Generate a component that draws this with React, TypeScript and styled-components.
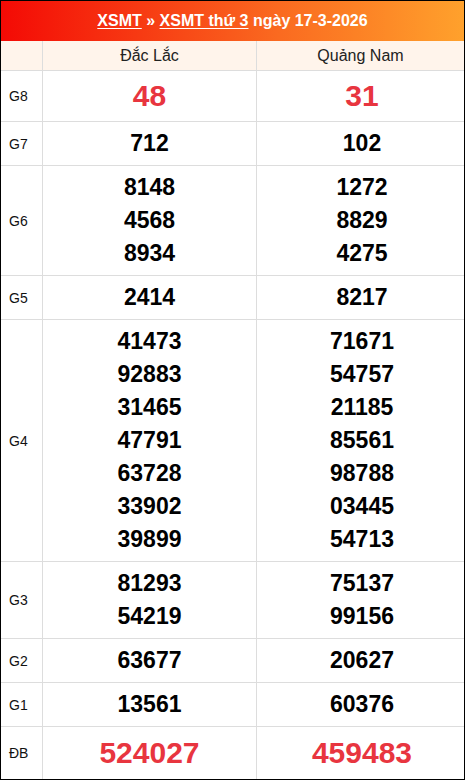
import React from 'react';
import styled, { createGlobalStyle } from 'styled-components';

const GlobalStyle = createGlobalStyle`
  html, body {
    margin: 0;
    padding: 0;
    background: #fff;
    font-family: "Liberation Sans", Arial, sans-serif;
  }
`;

// Styled components
const Board = styled.div`
  width: 465px;
  box-sizing: border-box;
  border: 1px solid #000;
`;

const TitleBar = styled.div`
  height: 40px;
  display: flex;
  align-items: center;
  justify-content: center;
  background: linear-gradient(90deg, #f40a05 0%, #fa6a20 60%, #ffa12c 100%);
  color: #fff;
  font-size: 16px;
  font-weight: bold;
`;

const TitleLink = styled.a`
  color: #fff;
  text-decoration: underline;
  text-underline-offset: 2px;
`;

const Row = styled.div<{ $head?: boolean }>`
  display: grid;
  grid-template-columns: 42px 214px 1fr;
  background: ${p => (p.$head ? '#fff4eb' : '#fff')};
  border-bottom: 1px solid #dddddd;

  &:last-child {
    border-bottom: none;
  }
`;

const LabelCell = styled.div`
  display: flex;
  align-items: center;
  padding-left: 8px;
  font-size: 14px;
  color: #111;
  border-right: 1px solid #dddddd;
`;

const StationCell = styled.div`
  display: flex;
  align-items: center;
  justify-content: center;
  height: 29px;
  font-size: 16px;
  color: #222;
  border-right: 1px solid #dddddd;

  &:last-child {
    border-right: none;
  }
`;

const PrizeCell = styled.div<{ $pad: number }>`
  display: flex;
  flex-direction: column;
  align-items: center;
  justify-content: center;
  padding: ${p => p.$pad}px 0;
  border-right: 1px solid #dddddd;

  &:last-child {
    border-right: none;
    padding-left: 3px;
  }
`;

const Num = styled.div<{ $big?: boolean }>`
  font-weight: bold;
  font-size: ${p => (p.$big ? '30px' : '23px')};
  line-height: ${p => (p.$big ? '40px' : '33px')};
  color: ${p => (p.$big ? '#e8353f' : '#000')};
`;

type Prize = {
  label: string;
  left: string[];
  right: string[];
  big?: boolean;
  pad: number;
};

const prizes: Prize[] = [
  { label: 'G8', left: ['48'], right: ['31'], big: true, pad: 5 },
  { label: 'G7', left: ['712'], right: ['102'], pad: 5 },
  { label: 'G6', left: ['8148', '4568', '8934'], right: ['1272', '8829', '4275'], pad: 5 },
  { label: 'G5', left: ['2414'], right: ['8217'], pad: 5 },
  {
    label: 'G4',
    left: ['41473', '92883', '31465', '47791', '63728', '33902', '39899'],
    right: ['71671', '54757', '21185', '85561', '98788', '03445', '54713'],
    pad: 5,
  },
  { label: 'G3', left: ['81293', '54219'], right: ['75137', '99156'], pad: 5 },
  { label: 'G2', left: ['63677'], right: ['20627'], pad: 5 },
  { label: 'G1', left: ['13561'], right: ['60376'], pad: 5 },
  { label: 'ĐB', left: ['524027'], right: ['459483'], big: true, pad: 6 },
];

const App: React.FC = () => {
  return (
    <>
      <GlobalStyle />
      <Board>
        <TitleBar>
          <TitleLink href="#">XSMT</TitleLink>
          &nbsp;»&nbsp;
          <TitleLink href="#">XSMT thứ 3</TitleLink>
          &nbsp;ngày 17-3-2026
        </TitleBar>

        <Row $head>
          <LabelCell />
          <StationCell>Đắc Lắc</StationCell>
          <StationCell>Quảng Nam</StationCell>
        </Row>

        {prizes.map(p => (
          <Row key={p.label}>
            <LabelCell>{p.label}</LabelCell>
            <PrizeCell $pad={p.pad}>
              {p.left.map((n, i) => (
                <Num key={i} $big={p.big}>{n}</Num>
              ))}
            </PrizeCell>
            <PrizeCell $pad={p.pad}>
              {p.right.map((n, i) => (
                <Num key={i} $big={p.big}>{n}</Num>
              ))}
            </PrizeCell>
          </Row>
        ))}
      </Board>
    </>
  );
};

export default App;
